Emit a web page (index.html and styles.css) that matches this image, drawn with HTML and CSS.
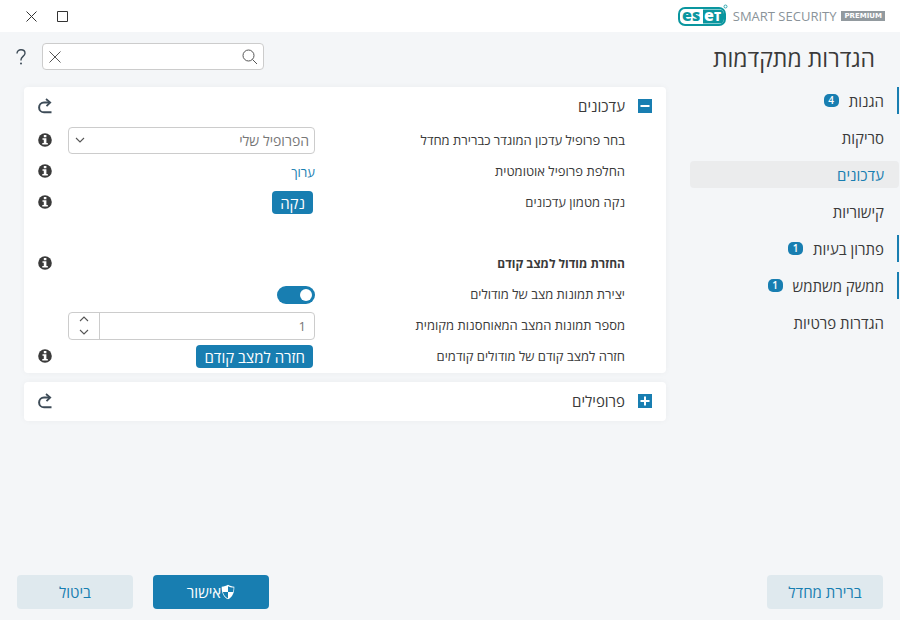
FILE: index.html
```
<!DOCTYPE html>
<html lang="he" dir="rtl">
<head>
<meta charset="utf-8">
<meta name="viewport" content="width=device-width, initial-scale=1">
<title>הגדרות מתקדמות</title>
<link rel="stylesheet" href="styles.css">
</head>
<body>
<svg class="sprite" aria-hidden="true">
  <symbol id="icon-undo" viewBox="0 0 16 16">
    <path d="M14.500 14.300H7a4.900 4.900 0 0 1 0-9.800h5" fill="none" stroke="currentColor" stroke-width="2"/>
    <path d="M9 1l4.200 3.500L9.500 8.200" fill="none" stroke="currentColor" stroke-width="1.800"/>
  </symbol>
  <symbol id="icon-info" viewBox="0 0 14 14">
    <circle cx="7" cy="7" r="6.800" fill="#3a3a3a"/>
    <path d="M5.800 2h2.600v2.200H5.800zM4.500 5.200h3.900v4.700h1.400v1.700H4.300V9.900h1.500V6.800H4.500z" fill="#fff"/>
  </symbol>
  <symbol id="icon-up" viewBox="0 0 10 6">
    <path d="M1 5l4-4 4 4" fill="none" stroke="#555" stroke-width="1.100"/>
  </symbol>
  <symbol id="icon-down" viewBox="0 0 10 6">
    <path d="M1 1l4 4 4-4" fill="none" stroke="#555" stroke-width="1.100"/>
  </symbol>
</svg>

<header class="titlebar">
  <div class="brand" dir="ltr">
    <svg class="logo" viewBox="0 0 50 22" role="img" aria-label="ESET">
      <rect x="1" y="4" width="46" height="17" rx="6" fill="#fff" stroke="#0a969f" stroke-width="2"/>
      <path d="M25 5.500h16.500a4.500 4.500 0 0 1 4.500 4.500v5a4.500 4.500 0 0 1-4.500 4.500H25z" fill="#0a969f"/>
      <text x="4" y="17" class="logo-text teal">es</text>
      <text x="26" y="17" class="logo-text white">e</text>
      <text x="36" y="17" class="logo-text white small">T</text>
      <circle cx="47.500" cy="2.500" r="1.500" fill="none" stroke="#0a969f" stroke-width=".8"/>
    </svg>
    <span class="product">SMART SECURITY</span>
    <span class="edition">PREMIUM</span>
  </div>
  <div class="window-buttons">
    <button aria-label="הגדל">
      <svg width="12" height="12" viewBox="0 0 12 12"><path d="M.5 1.500h10v10H.5z" fill="none" stroke="#333"/></svg>
    </button>
    <button aria-label="סגור">
      <svg width="11" height="11" viewBox="0 0 11 11"><path d="M.5.5l10 10M10.500.5l-10 10" stroke="#333"/></svg>
    </button>
  </div>
</header>

<div class="layout">
  <aside class="sidebar">
    <h1>הגדרות מתקדמות</h1>
    <nav>
      <a href="#" class="changed">הגנות <span class="badge">4</span></a>
      <a href="#">סריקות</a>
      <a href="#" class="active">עדכונים</a>
      <a href="#">קישוריות</a>
      <a href="#" class="changed">פתרון בעיות <span class="badge">1</span></a>
      <a href="#" class="changed">ממשק משתמש <span class="badge">1</span></a>
      <a href="#">הגדרות פרטיות</a>
    </nav>
  </aside>

  <main>
    <div class="toolbar">
      <div class="search">
        <svg width="16" height="16" viewBox="0 0 16 16"><circle cx="6.500" cy="6.500" r="5.500" fill="none" stroke="#555"/><path d="M10.500 10.500l4.500 4.500" stroke="#555"/></svg>
        <input type="text" aria-label="חיפוש">
        <button aria-label="נקה חיפוש">
          <svg width="12" height="12" viewBox="0 0 12 12"><path d="M.5.5l11 11M11.500.5l-11 11" stroke="#555"/></svg>
        </button>
      </div>
      <button class="help" aria-label="עזרה">
        <svg width="10" height="16" viewBox="0 0 10 16"><path d="M1 4.500C1 2.200 2.700.8 5 .8s4 1.400 4 3.400c0 3-4 3.400-4 6.500v.8" fill="none" stroke="#3d4b57" stroke-width="1.400"/><circle cx="5" cy="14.500" r="1" fill="#3d4b57"/></svg>
      </button>
    </div>

    <section class="card">
      <div class="card-header">
        <button class="toggle" aria-label="כווץ"><svg width="14" height="14" viewBox="0 0 14 14"><path d="M2.500 7h9" stroke="#fff" stroke-width="2"/></svg></button>
        <h2>עדכונים</h2>
        <button class="undo" aria-label="שחזר"><svg width="16" height="16"><use href="#icon-undo"/></svg></button>
      </div>

      <div class="row">
        <label for="profile">בחר פרופיל עדכון המוגדר כברירת מחדל</label>
        <div class="control">
          <div class="select">
            <select id="profile"><option>הפרופיל שלי</option></select>
            <svg width="10" height="6"><use href="#icon-down"/></svg>
          </div>
        </div>
        <button class="info" aria-label="מידע"><svg width="14" height="14"><use href="#icon-info"/></svg></button>
      </div>
      <div class="row">
        <span>החלפת פרופיל אוטומטית</span>
        <div class="control"><a href="#">ערוך</a></div>
        <button class="info" aria-label="מידע"><svg width="14" height="14"><use href="#icon-info"/></svg></button>
      </div>
      <div class="row">
        <span>נקה מטמון עדכונים</span>
        <div class="control"><button class="action">נקה</button></div>
        <button class="info" aria-label="מידע"><svg width="14" height="14"><use href="#icon-info"/></svg></button>
      </div>
      <div class="row subheading">
        <h3>החזרת מודול למצב קודם</h3>
        <div class="control"></div>
        <button class="info" aria-label="מידע"><svg width="14" height="14"><use href="#icon-info"/></svg></button>
      </div>
      <div class="row">
        <label for="snapshots">יצירת תמונות מצב של מודולים</label>
        <div class="control"><input type="checkbox" class="switch" id="snapshots" checked></div>
      </div>
      <div class="row">
        <label for="count">מספר תמונות המצב המאוחסנות מקומית</label>
        <div class="control">
          <div class="spinbox">
            <input type="text" id="count" value="1">
            <div class="spin-buttons">
              <button aria-label="הוסף"><svg width="10" height="6"><use href="#icon-up"/></svg></button>
              <button aria-label="הפחת"><svg width="10" height="6"><use href="#icon-down"/></svg></button>
            </div>
          </div>
        </div>
      </div>
      <div class="row">
        <span>חזרה למצב קודם של מודולים קודמים</span>
        <div class="control"><button class="action">חזרה למצב קודם</button></div>
        <button class="info" aria-label="מידע"><svg width="14" height="14"><use href="#icon-info"/></svg></button>
      </div>
    </section>

    <section class="card">
      <div class="card-header">
        <button class="toggle" aria-label="הרחב"><svg width="14" height="14" viewBox="0 0 14 14"><path d="M2.500 7h9M7 2.500v9" stroke="#fff" stroke-width="2"/></svg></button>
        <h2>פרופילים</h2>
        <button class="undo" aria-label="שחזר"><svg width="16" height="16"><use href="#icon-undo"/></svg></button>
      </div>
    </section>
  </main>
</div>

<footer>
  <button class="btn default">ברירת מחדל</button>
  <button class="btn primary">
    <svg width="14" height="16" viewBox="0 0 14 16">
      <path d="M7 .8c1.800 1.200 3.800 1.800 6.300 1.900C13.500 8.500 11.500 13 7 15.300 2.500 13 .5 8.500.7 2.700 3.200 2.600 5.200 2 7 .8z" fill="#fff"/>
      <path d="M7 2.200v5.800h5.100c.4-1.400.5-2.700.5-4.400C10.300 3.500 8.500 3 7 2.200zM7 8H1.900c.7 2.700 2.300 4.900 5.100 6.400z" fill="#187eb1"/>
    </svg>
    <span>אישור</span>
  </button>
  <button class="btn">ביטול</button>
</footer>
</body>
</html>
```
FILE: styles.css
```
* {
  box-sizing: border-box;
}
body {
  margin: 0;
  min-height: 100vh;
  display: flex;
  flex-direction: column;
  background: #f4f6f8;
  color: #3a3a3a;
  font-family: "Open Sans", "Noto Sans", sans-serif;
  font-size: 13px;
}
button {
  display: flex;
  align-items: center;
  justify-content: center;
  padding: 0;
  border: none;
  background: none;
  color: inherit;
  font: inherit;
  cursor: pointer;
}
input, select {
  font: inherit;
  color: #777;
}
a {
  color: #187eb1;
  text-decoration: none;
}
h1, h2, h3 {
  margin: 0;
}
.sprite {
  display: none;
}

/* title bar */
.titlebar {
  display: flex;
  align-items: center;
  justify-content: space-between;
  height: 32px;
  padding: 0 15px 0 24px;
  background: #fff;
}
.brand {
  display: flex;
  align-items: center;
  gap: 5px;
}
.logo {
  width: 50px;
  height: 22px;
  margin-bottom: 2px;
}
.logo-text {
  font-size: 16px;
  font-weight: 800;
}
.logo-text.small {
  font-size: 12px;
}
.teal {
  fill: #0a969f;
}
.white {
  fill: #fff;
}
.product {
  color: #8a9399;
  font-size: 13px;
  font-weight: 400;
}
.edition {
  padding: 0 3px;
  background: #929a9f;
  color: #fff;
  font-family: "DejaVu Sans", sans-serif;
  font-size: 7px;
  font-weight: 700;
  line-height: 10px;
}
.window-buttons {
  display: flex;
  gap: 18px;
}
.window-buttons button {
  width: 14px;
  height: 14px;
}

/* sidebar */
.layout {
  display: flex;
  flex: 1;
}
.sidebar {
  width: 210px;
  padding: 11px 1px 0 0;
}
.sidebar h1 {
  height: 44px;
  padding-right: 24px;
  font-size: 23px;
  font-weight: 400;
  line-height: 30px;
}
nav {
  display: flex;
  flex-direction: column;
  gap: 10px;
}
nav a {
  display: flex;
  align-items: center;
  gap: 10px;
  height: 27px;
  padding-right: 13px;
  border-right: 2px solid transparent;
  border-radius: 4px;
  color: #3a3a3a;
  font-size: 15px;
}
nav a.changed {
  border-right-color: #187eb1;
  border-radius: 0;
}
nav a.active {
  background: #ebeced;
  border-right-color: #ebeced;
  color: #187eb1;
}
.badge {
  width: 15px;
  height: 13px;
  border-radius: 5px;
  background: #187eb1;
  color: #fff;
  font-size: 10px;
  font-weight: 600;
  line-height: 13px;
  text-align: center;
}

/* content */
main {
  flex: 1;
  padding: 11px 24px 0 24px;
}
.toolbar {
  display: flex;
  align-items: center;
  justify-content: flex-end;
  gap: 16px;
  height: 27px;
  margin: 0 0 17px -8px;
}
.search {
  display: flex;
  align-items: center;
  width: 222px;
  height: 27px;
  padding: 0 5px 0 6px;
  border: 1px solid #ccc;
  border-radius: 4px;
  background: #fff;
}
.search input {
  flex: 1;
  min-width: 0;
  border: none;
  outline: none;
  background: none;
}
.card {
  margin-bottom: 9px;
  padding-bottom: 1px;
  border-radius: 4px;
  background: #fff;
  box-shadow: 0 0 6px rgba(0, 0, 0, 0.04);
}
.card-header {
  display: flex;
  align-items: center;
  height: 38px;
  padding: 0 14px 0 13px;
}
.card-header h2 {
  flex: 1;
  padding-right: 13px;
  font-size: 15px;
  font-weight: 400;
}
.toggle {
  width: 14px;
  height: 14px;
  background: #187eb1;
}
.undo {
  color: #3d4b57;
}
.row {
  display: grid;
  grid-template-columns: 1fr 247px 30px;
  align-items: center;
  height: 31px;
  padding: 0 41px 0 14px;
}
.row.subheading {
  margin-top: 30px;
}
.row h3 {
  font-size: 12px;
}
.row label, .row span, .info {
  padding-bottom: 2px;
}
.info {
  justify-self: end;
}
.select {
  position: relative;
}
.select select {
  display: block;
  width: 100%;
  height: 27px;
  padding: 0 5px;
  border: 1px solid #ccc;
  border-radius: 4px;
  background: #fff;
  font-size: 14px;
  appearance: none;
}
.select svg {
  position: absolute;
  left: 7px;
  top: 10px;
  pointer-events: none;
}
.action {
  height: 23px;
  margin-right: 2px;
  padding: 0 8px;
  border-radius: 4px;
  background: #187eb1;
  color: #fff;
  font-size: 15px;
  font-weight: 500;
}
.switch {
  display: flex;
  align-items: center;
  width: 38px;
  height: 18px;
  margin: 0;
  padding: 0 3px;
  border-radius: 9px;
  background: #aaa;
  appearance: none;
  cursor: pointer;
}
.switch::before {
  content: "";
  width: 12px;
  height: 12px;
  border-radius: 50%;
  background: #fff;
}
.switch:checked {
  background: #187eb1;
}
.spinbox {
  display: flex;
  height: 28px;
  border: 1px solid #ccc;
  border-radius: 4px;
  background: #fff;
}
.spinbox input {
  flex: 1;
  min-width: 0;
  padding: 0 8px;
  border: none;
  outline: none;
  background: none;
}
.spin-buttons {
  display: flex;
  flex-direction: column;
  width: 31px;
  border-right: 1px solid #ccc;
}
.spin-buttons button {
  flex: 1;
}

/* footer */
footer {
  display: flex;
  gap: 20px;
  padding: 11px 17px;
}
.btn {
  width: 116px;
  height: 34px;
  border-radius: 4px;
  background: #dfe9ee;
  color: #187eb1;
  font-size: 15px;
  font-weight: 500;
}
.btn.default {
  margin-left: auto;
}
.btn.primary {
  background: #187eb1;
  color: #fff;
}
```
